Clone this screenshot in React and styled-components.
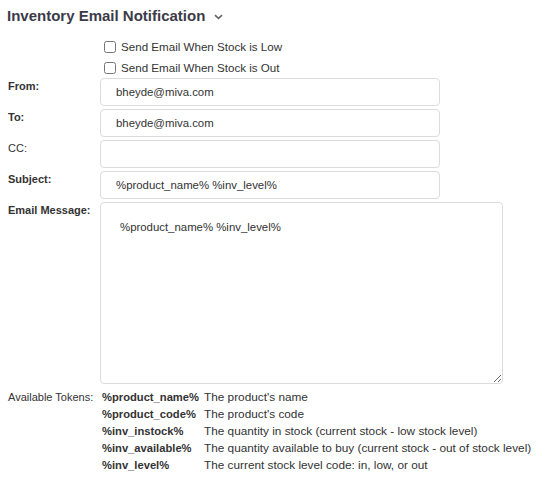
import React from "react"
import styled, { createGlobalStyle } from "styled-components"

const GlobalStyle = createGlobalStyle`
  body {
    margin: 0;
    background: #ffffff;
    font-family: "Liberation Sans", Arial, sans-serif;
    color: #333;
  }
`

const Page = styled.div`
  width: 550px;
  height: 480px;
  padding: 6px 0 0 7px;
  box-sizing: border-box;
`

const Heading = styled.h2`
  display: flex;
  align-items: center;
  gap: 9px;
  margin: 0 0 10px 0;
  font-size: 15px;
  line-height: 20px;
  font-weight: 700;
  color: #3b3b48;
`

const Chevron = styled.svg`
  width: 9px;
  height: 6px;
  margin-top: 1px;
`

const CheckGroup = styled.div`
  padding-left: 93px;
`

const CheckRow = styled.label`
  display: flex;
  align-items: center;
  height: 21px;
  font-size: 11.6px;
  color: #333;

  & input {
    width: 12px;
    height: 12px;
    margin: 0 5px 0 4px;
  }
`

const Form = styled.div`
  display: grid;
  grid-template-columns: 92px 340px;
  row-gap: 3px;
  padding-left: 1px;
`

const Label = styled.div`
  font-size: 11px;
  font-weight: ${(p) => (p.$bold ? 700 : 400)};
  color: #333;
  padding-top: 2px;
  line-height: 13px;
`

const Input = styled.input`
  box-sizing: border-box;
  width: 340px;
  height: 28px;
  border: 1px solid #dcdcdc;
  border-radius: 4px;
  padding: 0 15px;
  font-family: "Liberation Sans", Arial, sans-serif;
  font-size: 11.4px;
  color: #333;
  outline: none;
`

const Message = styled.textarea`
  box-sizing: border-box;
  width: 403px;
  height: 182px;
  border: 1px solid #dcdcdc;
  border-radius: 4px;
  padding: 18px 19px;
  font-family: "Liberation Sans", Arial, sans-serif;
  font-size: 11.4px;
  color: #333;
  outline: none;
  resize: vertical;
  display: block;
`

const Tokens = styled.div`
  display: grid;
  grid-template-columns: 94px 102px auto;
  margin-top: 5px;
  padding-left: 1px;
  font-size: 11px;
  line-height: 17px;
  color: #333;
`

const TokenName = styled.div`
  font-weight: 700;
  font-size: 11.2px;
  color: #333;
`

const TokenDesc = styled.div`
  font-size: 11.8px;
  color: #333;
`

const tokens = [
  ["%product_name%", "The product's name"],
  ["%product_code%", "The product's code"],
  ["%inv_instock%", "The quantity in stock (current stock - low stock level)"],
  ["%inv_available%", "The quantity available to buy (current stock - out of stock level)"],
  ["%inv_level%", "The current stock level code: in, low, or out"],
]

export default function App() {
  return (
    <Page>
      <GlobalStyle />
      <Heading>
        Inventory Email Notification
        <Chevron viewBox="0 0 9 6">
          <path d="M1 1.2 L4.5 4.4 L8 1.2" fill="none" stroke="#666" strokeWidth="1.6" />
        </Chevron>
      </Heading>
      <CheckGroup>
        <CheckRow>
          <input type="checkbox" />
          Send Email When Stock is Low
        </CheckRow>
        <CheckRow>
          <input type="checkbox" />
          Send Email When Stock is Out
        </CheckRow>
      </CheckGroup>
      <Form>
        <Label $bold>From:</Label>
        <Input defaultValue="bheyde@miva.com" />
        <Label $bold>To:</Label>
        <Input defaultValue="bheyde@miva.com" />
        <Label>CC:</Label>
        <Input defaultValue="" />
        <Label $bold>Subject:</Label>
        <Input defaultValue="%product_name% %inv_level%" />
        <Label $bold>Email Message:</Label>
        <Message defaultValue="%product_name% %inv_level%" />
      </Form>
      <Tokens>
        {tokens.map(([name, desc], i) => (
          <React.Fragment key={name}>
            <div>{i === 0 ? "Available Tokens:" : ""}</div>
            <TokenName>{name}</TokenName>
            <TokenDesc>{desc}</TokenDesc>
          </React.Fragment>
        ))}
      </Tokens>
    </Page>
  )
}
